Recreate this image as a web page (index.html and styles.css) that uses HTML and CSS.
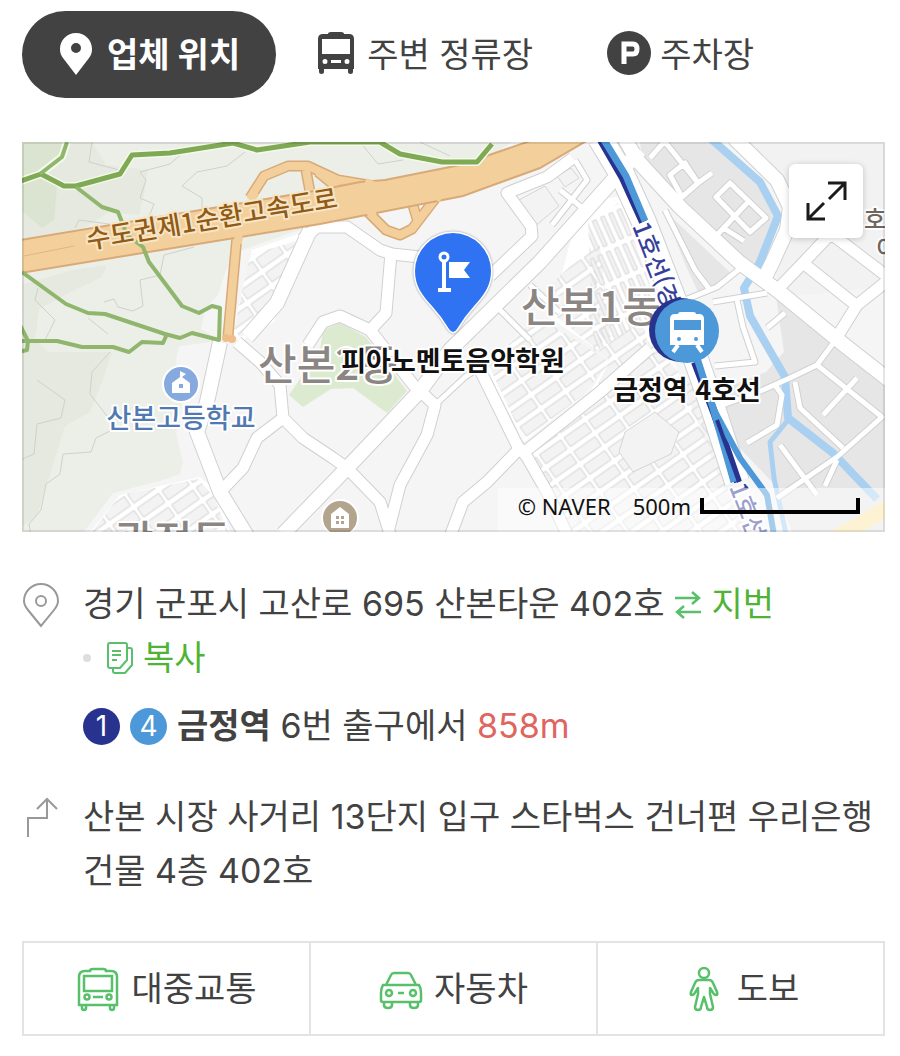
FILE: index.html
```
<!DOCTYPE html>
<html lang="ko">
<head>
    <meta charset="UTF-8">
    <meta name="viewport" content="width=device-width, initial-scale=1.0">
    <title>업체 위치</title>
    <link rel="stylesheet" href="styles.css">
</head>
<body>

<nav class="tabs">
    <button class="tab active" type="button">
        <svg class="icon" viewBox="0 1 44 44"><path fill="currentColor" fill-rule="evenodd" d="M22 1C13 1 6 8 6 17c0 4 1 6 3 9l13 17 13-17c2-3 3-5 3-9C38 8 31 1 22 1zm0 10a5 5 0 1 1 0 10 5 5 0 0 1 0-10z"/></svg>
        <span>업체 위치</span>
    </button>
    <button class="tab" type="button">
        <svg class="icon" viewBox="0 1 44 44"><path fill="currentColor" fill-rule="evenodd" d="M14 2q0-2 3-2h10q3 0 3 2h5q5 0 5 5v30h-1v3q0 2-2.500 2t-2.500-2v-3H10v3q0 2-2.500 2T5 40v-3H4V7q0-5 5-5zM8 7v15h28V7zM11 27a2.500 2.500 0 1 0 0 5 2.500 2.500 0 0 0 0-5zm22 0a2.500 2.500 0 1 0 0 5 2.500 2.500 0 0 0 0-5zM17 28v3h10v-3z"/></svg>
        <span>주변 정류장</span>
    </button>
    <button class="tab" type="button">
        <svg class="icon" viewBox="0 2 44 44"><circle cx="22" cy="22" r="22" fill="currentColor"/><path fill="none" stroke="#fff" stroke-width="5" d="M17 33V13h9q4 0 4 5t-4 5h-9"/></svg>
        <span>주차장</span>
    </button>
</nav>

<div class="map">
    <svg class="map-canvas" viewBox="22 142 863 390" role="img" aria-label="지도">
        <defs>
            <path id="road-lg" d="M640 150L540 262 450 350 420 391 347 468 283 534M620 130l17 30 43 47 60 56 37 27 66 54 46 36M734 138l43 42 13 27-3 23-15 33-9 18 M220 342l-13 60-10 30 23 60 27 44M310 230l-33 73-30 34"/>
            <path id="road-md" d="M302 240l15-13h30l33 23 12 4 28 3M391 253l-5 60-13 14M308 345l15-23 17-6 30 14 45 57M220 492l23-24 14-30 26-20-3-33-20-23-23-20M283 418l20 20 30 20 14 10 33 34 10 32M389 528l11-43 27-50 8-30-15-14M481 372l36 73 10 12 20 35 20 42M520 448l-33 34-24 20-12 32M527 450l73-58 50-44M573 158l-26 19-40 16 24 33 1 10-42 40M777 290l26-27 34-36M803 263l54 43M837 337l20-32 30-24M830 233l58 44"/>
            <path id="road-sm" d="M680 302l37-15 25-20M713 302l24-4 30-5M737 300l6 27 12 35-40 4M723 405l40-15 27-12 27-13 20-27M775 385l7 10-5 30-30 18M795 382l5 26 43 40M817 365l65 52-45 40-60 41M780 445l37 50M823 415l34-37M837 460l-12 26M650 158l14-16M665 142l33 41 14-10M685 163l-15 12 12 22 16-14zM730 183l-14 14 34 35 16-14zM748 202l-32 34M722 227l22 14M767 328l18-15M435 405l30-28 12-8M560 190l30 24M575 160l12 20-35 45M530 285l30 28M500 310l30 30M665 210l30 60 15 20"/>
            <path id="railway" d="M600 138l23 38 21 46 42 109 27 77 24 74"/>
            <pattern id="blocks" width="30" height="17" patternUnits="userSpaceOnUse" patternTransform="rotate(-35)">
                <path class="block" d="M1 2h26v11H1z"/>
            </pattern>
            <pattern id="strips" width="9" height="34" patternUnits="userSpaceOnUse" patternTransform="rotate(-24)">
                <path class="block" d="M1 1h4v28H1z"/>
            </pattern>
        </defs>

        <rect class="land" x="22" y="142" width="863" height="390"/>

        <!-- hills -->
        <path class="hill" d="M22 142h490l-40 28-230 80-16 20-8 25-12 12-5 22 20 12-42 5-3 14 6 40-6 34 7 28-3 12-17 6-50 13-30 40H22z"/>
        <path class="hill-shade" d="M22 142h70l14 23 42 5-4 25-5 20-30-3-23 15-64 15zM22 285l50-15 35-5-5 12-35 17-28 15-4 30 20 20-30 22zM22 352h90l-10 30-12 30-25 14-28 90-15 10z"/>
        <path class="hill-dark" d="M22 142h47l-8 22-20 10 16 12-3 34-12 8-20-17z"/>
        <path class="contour" d="M92 142l-3 20 30 8M140 172l6 8-6 18 14 6-14 36M140 172l30-8 16-14M182 186l15-14 30-6 18-14M182 186l20 12v16M75 228l4-8 30 4M38 288l-3 12 20 20-10 20M104 302l10-3 4 8 15 4 10-5-3-26 20-5 4-20 30-8M37 380l28 20-4 18-24 6-3 30-14 6M110 352l-18 20-2 22 26 34-20 10-5 14-28 2-3 20-14 10-5 26-12 14 3 18M88 318l20 16M360 142l18 22 25-4M420 142l30 14"/>
        <path class="park" d="M320 350l3-20 17-7 26 14 41 54-20 22-34-25-22 1-28 18-14-12z"/>

        <!-- industrial blocks along the stream -->
        <path class="works" d="M640 142h72l48 40 16 34-20 46-18 2-96-106zM664 210l70 66-36 16-12-26zM775 290l60 50 50 42v150h-93l-20-50-38-40-18-50 50-20 18-20z"/>
        <path class="land-2" d="M732 142h153v145l-101 10-10-30 18-56-16-36z"/>

        <!-- dense housing -->
        <path class="street-bg" d="M580 205l44-10 36 130 80 207H570l-42-82 62-58 20-34-60-40 z"/>
        <path fill="url(#blocks)" d="M545 290l40-38 36-22 26 110 60 60 40 132H570l-42-78 62-54 20-40-74-60z"/>
        <path class="street-bg" d="M484 366l52-48 74 44-30 36-56 44z"/>
        <path fill="url(#blocks)" d="M488 364l50-48 72 46-28 34-58 44z"/>
        <path class="street-bg" d="M596 210l28-14 42 120-56 20z"/>
        <path fill="url(#strips)" d="M588 222l32-20 40 110-66 40z"/>
        <path class="street-bg" d="M120 495l80-18 20 17 10 38H90z"/>
        <path fill="url(#blocks)" d="M120 495l78-16 16 18 14 35H92z"/>
        <path class="street-bg" d="M252 250l52-18-30 90-34 20-8-10z"/>
        <path fill="url(#blocks)" d="M250 255l46-14-30 80-26 16-6-8z"/>
        <path class="block" d="M625 432l30-20 24 20-8 22-38 18-14-20zM519 200l26-14 14 20-26 22zM557 176l14-8 8 10-14 9z"/>

        <use href="#road-sm" class="casing sm"/>
        <use href="#road-md" class="casing md"/>
        <use href="#road-lg" class="casing lg"/>
        <use href="#railway" class="casing track"/>
        <path class="stream" d="M710 138l50 44 18 34-18 46-16 26 6 28 35 61 3 41 45 35 44 46" stroke-width="8"/>
        <path class="stream" d="M788 420l-18 22 4 36 12 56" stroke-width="5"/>
        <use href="#road-sm" class="road sm"/>
        <use href="#road-md" class="road md"/>
        <use href="#road-lg" class="road lg"/>
        <use href="#railway" class="road track"/>
        <path class="road-yellow" d="M836 538l52-30"/>

        <!-- expressway with its ramps -->
        <path class="ramp-edge" d="M250 198l14-22 24-10 20 0 30 14 36 6M306 170l4 22M318 172l22 18M368 212l18 18 14 5 12-6 26-34M412 202l6 20M237 236l-9 100"/>
        <path class="ramp" d="M250 198l14-22 24-10 20 0 30 14 36 6M306 170l4 22M318 172l22 18M368 212l18 18 14 5 12-6 26-34M412 202l6 20M237 236l-9 100"/>
        <path class="expressway" d="M20 240l300-50 40-8 25-2 75-15 73-25h55l-48 28-77 28-143 28-300 49z"/>
        <path class="ramp-line" d="M24 256l50-10"/>
        <path class="ramp" d="M239 228l-1 16M250 200l6-8M375 186l-10-4M368 210l6 6M436 200l4-6"/>
        <circle class="junction" cx="226" cy="338" r="4"/><circle class="junction" cx="232" cy="339" r="4"/>

        <!-- trails -->
        <path class="trail-edge" d="M18 182l23-8 23 12h12l44-12 12-19 38-2 63-10 24 7 53-8h70l20 12 42 8h35l15-18M67 142l-5 15-22 17"/>
        <path class="trail" d="M18 182l23-8 23 12h12l44-12 12-19 38-2 63-10 24 7 53-8h70l20 12 42 8h35l15-18"/>
        <path class="trail thin" d="M67 142l-5 15-22 17M76 187l26 20 16 5 9 23 16 12 6 15 33 44 17 7 13-7 8 2-1 32-27-7-12 5-15-4-60-20-17-1-22-9-44-32M20 325l8 16-1 9-9 2M22 341h35l25 6h31l16 5 13-10 21 1 4-9"/>

        <!-- subway lines 1 and 4 -->
        <path class="line-1" d="M601 140l22 38 20 44M695 362l19 50 24 70"/>
        <path class="line-4" d="M604 140l22 36 19 45M697 358l16 50 21 74"/>
        <path class="line-4 branch" d="M713 408l27 50 27 37 7 40"/>
        <path class="line-1 branch" d="M717 420l22 62"/>

        <!-- labels -->
        <text class="label rail" transform="translate(632 226) rotate(69)">1호선(경</text>
        <text class="label rail" transform="translate(729 487) rotate(69)">1호선</text>
        <text class="label highway" transform="translate(88 249) rotate(-9.500)">수도권제1순환고속도로</text>
        <text class="label area" x="521" y="322">산본1동</text>
        <text class="label area" x="258" y="380">산본2동</text>
        <text class="label area" x="115" y="556">광정동</text>
        <text class="label place" x="864" y="228">호</text>
        <text class="label place" x="876" y="257">이</text>
        <text class="label school" x="181" y="428">산본고등학교</text>

        <g class="poi">
            <circle cx="181" cy="384" r="18" fill="#86aade"/>
            <path fill="#fff" d="M172 383l8-6v-6l6 3-4 3 8 6v10h-18z"/><path fill="#86aade" d="M179 384h4v4h-4z"/>
            <circle cx="340" cy="518" r="18" fill="#b3a48e"/>
            <path fill="#fff" d="M331 514l9-7 9 7v14h-18z"/><path fill="#b3a48e" d="M336 516h3v3h-3zm5 0h3v3h-3zm-5 5h3v3h-3zm5 0h3v3h-3z"/>
        </g>

        <!-- station marker -->
        <circle cx="681" cy="330" r="32" fill="#27338f"/>
        <circle cx="687" cy="331" r="32" fill="#4c98d8"/>
        <path fill="#fff" fill-rule="evenodd" d="M678 314q0-2 3-2h12q3 0 3 2h3q5 0 5 5v26h-34v-26q0-5 5-5zM674 320v10h27v-10zM679 337a2 2 0 1 0 0 4 2 2 0 0 0 0-4zm17 0a2 2 0 1 0 0 4 2 2 0 0 0 0-4z"/>
        <path fill="none" stroke="#fff" stroke-width="4" d="M678 345l-5 7M697 345l5 7"/>
        <text class="label marker" x="687" y="400">금정역 4호선</text>

        <!-- business marker -->
        <path class="pin" d="M453 332q-2 0-4-3-7-12-17-23c-10-11-17-20-17-35a38 38 0 0 1 76 0c0 15-7 24-17 35q-10 11-17 23-2 3-4 3z"/>
        <circle cx="444" cy="257" r="4" fill="none" stroke="#fff" stroke-width="3"/>
        <path fill="#fff" d="M442 261h4v27h5v4h-13v-4h4zM449 262h21l-6 8 6 8h-21z"/>
        <text class="label marker" x="453" y="371">피아노멘토음악학원</text>
    </svg>

    <button class="expand" type="button" aria-label="지도 확대">
        <svg viewBox="0 0 74 74"><path fill="none" stroke="#1b1b1b" stroke-width="3" d="M39 19h17v17M56 19L40 35M19 39v16h17M19 55l16-16"/></svg>
    </button>
    <div class="scale">
        <span>© NAVER</span>
        <span class="scale-text">500m</span>
        <span class="scale-bar"></span>
    </div>
</div>

<section class="info">
    <div class="row">
        <svg class="row-icon" viewBox="0 0 38 54"><g fill="none" stroke="#999" stroke-width="2"><path d="M19 49L6 33q-4-5-4-9a17 17 0 0 1 34 0q0 4-4 9z"/><circle cx="19" cy="24" r="5"/></g></svg>
        <div class="row-body">
            <div class="address">
                <span>경기 군포시 고산로 695 산본타운 402호</span>
                <button class="link" type="button">
                    <svg width="28" height="30" viewBox="0 0 28 30"><path fill="none" stroke="#58c06a" stroke-width="2.500" d="M1 9h24M18 3l7 6-7 6M27 23H3M10 17l-7 6 7 6"/></svg>
                    지번
                </button>
                <span class="copy">
                    <span class="dot"></span>
                    <button class="link" type="button">
                        <svg width="28" height="34" viewBox="0 0 28 34"><g fill="none" stroke="#58c06a" stroke-width="2"><path d="M4 2h15q2 0 2 2v15l-7 8H4q-2 0-2-2V4q0-2 2-2zM21 7h3q2 0 2 2v15l-7 8H9q-2 0-2-2v-3M6 10h9M6 14h9M6 19h5"/></g></svg>
                        복사
                    </button>
                </span>
            </div>
            <p class="station">
                <span class="line one">1</span>
                <span class="line four">4</span>
                <span><strong>금정역</strong> 6번 출구에서 <em>858m</em></span>
            </p>
        </div>
    </div>
    <div class="row">
        <svg class="row-icon" viewBox="0 0 38 54"><path fill="none" stroke="#999" stroke-width="2" d="M6 47V28h19V9M15 19L25 9l10 10"/></svg>
        <p class="row-body">산본 시장 사거리 13단지 입구 스타벅스 건너편 우리은행 건물 4층 402호</p>
    </div>
</section>

<div class="routes">
    <button class="route" type="button">
        <svg class="icon" viewBox="0 0 44 44"><g fill="none" stroke="#58c06a" stroke-width="2.500"><path d="M14 4q0-2 3-2h10q3 0 3 2h5q6 0 6 6v28H3V10q0-6 6-6z"/><path d="M8 9h28v15H8zM17 30h10M6 38v3q0 2 2 2t2-2v-3M34 38v3q0 2 2 2t2-2v-3"/><circle cx="11" cy="30" r="2.500"/><circle cx="33" cy="30" r="2.500"/></g></svg>
        대중교통
    </button>
    <button class="route" type="button">
        <svg class="icon" viewBox="0 0 44 44"><g fill="none" stroke="#58c06a" stroke-width="2.500"><path d="M7 18l5-10q1-2 3-2h14q2 0 3 2l5 10M4 18h36q2 3 2 8v7q0 2-2 2H4q-2 0-2-2v-7q0-5 2-8zM5 35v3q0 3 4 3t4-3v-3M31 35v3q0 3 4 3t4-3v-3M19 26h6"/><circle cx="10" cy="26" r="3"/><circle cx="34" cy="26" r="3"/></g></svg>
        자동차
    </button>
    <button class="route" type="button">
        <svg class="icon" viewBox="0 0 44 44"><g fill="none" stroke="#58c06a" stroke-width="2.500" stroke-linejoin="round"><circle cx="22" cy="6" r="5"/><path d="M17 13h10q3 0 4 3l4 9q1 3-1 3t-4-4l-2-3v6l3 13q0 3-3 3t-3-3l-3-10-3 10q0 3-3 3t-3-3l3-13v-6l-2 3q-2 4-4 4t-1-3l4-9q1-3 4-3z"/></g></svg>
        도보
    </button>
</div>

</body>
</html>
```
FILE: styles.css
```
* {
    box-sizing: border-box;
}

body {
    margin: 0;
    padding: 11px 15px 20px 22px;
    background-color: #fff;
    color: #424242;
    font-family: Inter, "Noto Sans CJK KR", sans-serif;
    font-size: 34px;
    line-height: 54px;
    word-break: keep-all;
}

button {
    margin: 0;
    padding: 0;
    border: none;
    background: none;
    color: inherit;
    font: inherit;
    cursor: pointer;
}

p {
    margin: 0;
}

svg {
    display: block;
    flex: none;
}

.icon {
    width: 44px;
    height: 44px;
    overflow: visible;
}

/* tabs */
.tabs {
    display: flex;
    gap: 6px;
}

.tab {
    display: flex;
    align-items: center;
    gap: 9px;
    height: 87px;
    padding: 0 36px 0 32px;
    border-radius: 44px;
    white-space: nowrap;
}

.tab.active {
    background-color: #424242;
    color: #fff;
    font-weight: bold;
}

/* map */
.map {
    position: relative;
    margin-top: 44px;
    overflow: hidden;
}

.map::after {
    content: "";
    position: absolute;
    inset: 0;
    border: 2px solid rgba(0, 0, 0, 0.1);
    pointer-events: none;
}

.map-canvas {
    width: 100%;
    height: auto;
}

.land { fill: #f5f5f5; }
.land-2 { fill: #f2f2f2; }
.hill { fill: #ebefe8; }
.hill-shade { fill: #e5e9df; }
.hill-dark { fill: #dbe4d0; }
.park { fill: #dcebcf; }
.works { fill: #e6e6e6; }
.street-bg { fill: #fff; }

.contour {
    fill: none;
    stroke: #cfd2cc;
}

.block {
    fill: #f3f3f3;
    stroke: #d6d6d6;
}

.casing,
.road,
.stream,
.ramp,
.ramp-edge,
.ramp-line,
.trail,
.trail-edge,
.line-1,
.line-4,
.road-yellow {
    fill: none;
    stroke-linejoin: round;
}

.casing { stroke: #d0d0d0; }
.casing.sm { stroke-width: 7px; }
.casing.md { stroke-width: 13px; }
.casing.lg { stroke-width: 16px; }
.casing.track { stroke-width: 26px; }

.road { stroke: #fff; }
.road.sm { stroke-width: 5px; }
.road.md { stroke-width: 11px; }
.road.lg { stroke-width: 14px; }
.road.track { stroke-width: 24px; }

.road-yellow {
    stroke: #fae6a8;
    stroke-width: 16px;
}

.stream { stroke: #a9d0f1; }

.expressway {
    fill: #f3d09b;
    stroke: #d9aa78;
    stroke-width: 2px;
}

.ramp-edge {
    stroke: #d9aa78;
    stroke-width: 11px;
}

.ramp {
    stroke: #f3d09b;
    stroke-width: 8px;
}

.ramp-line { stroke: #dfb684; }
.junction { fill: #efbd87; }

.trail-edge {
    stroke: #f3fae9;
    stroke-width: 8px;
}

.trail {
    stroke: #7fa955;
    stroke-width: 5px;
}

.trail.thin {
    stroke: #8fb66c;
    stroke-width: 4px;
}

.line-1 {
    stroke: #27338f;
    stroke-width: 8px;
}

.line-4 {
    stroke: #4c98d8;
    stroke-width: 7px;
}

.line-1.branch { stroke-width: 4px; }
.line-4.branch { stroke-width: 6px; }

.label {
    font-family: "Noto Sans CJK KR", sans-serif;
    font-size: 27px;
    font-weight: 500;
    stroke: #fff;
    stroke-width: 4px;
    stroke-linejoin: round;
    paint-order: stroke;
}

.label.rail {
    fill: #36409a;
    font-size: 24px;
}

.label.highway {
    fill: #8f5b16;
    stroke: #f8e5c6;
    font-size: 26px;
}

.label.area {
    fill: #8b8684;
    font-size: 42px;
}

.label.place {
    fill: #70665f;
    font-size: 24px;
}

.label.school {
    fill: #4f79b0;
    text-anchor: middle;
}

.label.marker {
    fill: #111;
    font-weight: bold;
    text-anchor: middle;
}

.poi circle {
    stroke: #fff;
    stroke-width: 2px;
}

.pin {
    fill: #2f73f3;
    stroke: #fff;
    stroke-width: 3px;
    paint-order: stroke;
    filter: drop-shadow(0 0 1px rgba(0, 0, 0, 0.4));
}

.expand {
    position: absolute;
    top: 22px;
    right: 22px;
    width: 74px;
    height: 74px;
    border-radius: 6px;
    background-color: #fff;
    box-shadow: 0 1px 6px rgba(0, 0, 0, 0.2);
}

.scale {
    position: absolute;
    right: 0;
    bottom: 0;
    display: flex;
    align-items: center;
    height: 44px;
    padding: 0 25px 8px 20px;
    background-color: rgba(255, 255, 255, 0.5);
    color: #111;
    font-family: "Noto Sans", sans-serif;
    font-size: 22px;
    line-height: 32px;
}

.scale-text {
    margin: 0 9px 0 22px;
}

.scale-bar {
    width: 160px;
    height: 16px;
    border: 4px solid #000;
    border-top: none;
}

/* address and directions */
.info {
    display: flex;
    flex-direction: column;
    gap: 37px;
    margin-top: 45px;
}

.row {
    display: flex;
    gap: 23px;
}

.row-icon {
    width: 38px;
    height: 54px;
}

.row-body {
    flex: 1;
}

.address {
    display: flex;
    flex-wrap: wrap;
    column-gap: 10px;
}

.link {
    display: inline-flex;
    align-items: center;
    gap: 9px;
    color: #4fb336;
}

.copy {
    display: flex;
    align-items: center;
    gap: 15px;
}

.dot {
    width: 8px;
    height: 8px;
    border-radius: 50%;
    background-color: #dedede;
}

.station {
    display: flex;
    align-items: center;
    gap: 10px;
    margin-top: 14px;
}

.station em {
    color: #e0655e;
    font-style: normal;
}

.line {
    width: 37px;
    height: 37px;
    border-radius: 50%;
    color: #fff;
    font-size: 28px;
    line-height: 37px;
    text-align: center;
}

.line.one {
    background-color: #27338f;
}

.line.four {
    background-color: #4c98d8;
}

/* route buttons */
.routes {
    display: flex;
    margin-top: 43px;
    border: 2px solid #e2e3e4;
}

.route {
    display: flex;
    flex: 1;
    align-items: center;
    justify-content: center;
    gap: 11px;
    height: 91px;
}

.route + .route {
    border-left: 2px solid #e2e3e4;
}
```
